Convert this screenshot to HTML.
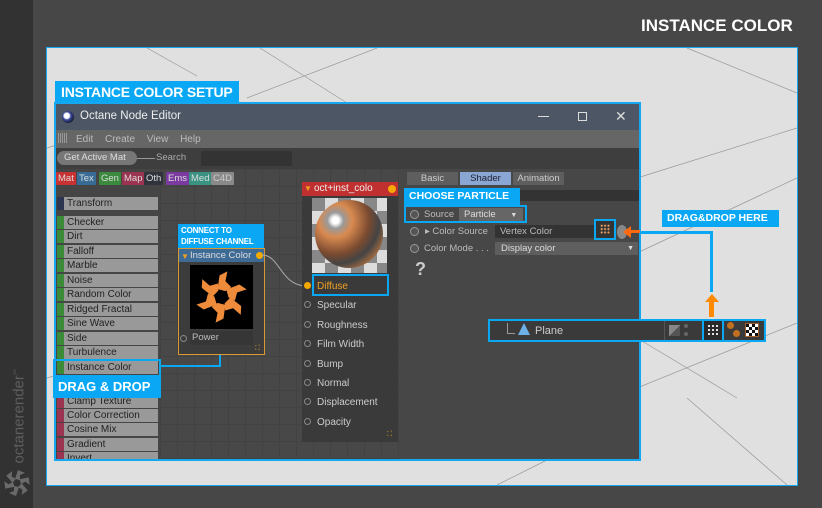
<!DOCTYPE html>
<html><head><meta charset="utf-8"><style>
*{margin:0;padding:0;box-sizing:border-box}
body{width:822px;height:508px;background:#474747;position:relative;overflow:hidden;font-family:"Liberation Sans",sans-serif;font-size:10px;color:#ddd}
.a{position:absolute}
.lbl{position:absolute;background:#0aa8f4;color:#fff;font-weight:bold;white-space:nowrap;overflow:hidden}
.li{position:absolute;left:57px;width:101px;height:13px;background:#999;color:#222;font-size:10px;line-height:13px;border-left:7px solid #3a8a3a;padding-left:3px}
.row{position:absolute;left:302px;width:86px;height:19px;color:#ccc;font-size:10px;line-height:19px}
.row span{position:absolute;left:12px;width:74px;top:1px;height:18px;background:#3a3a3a;padding-left:3px}
.row i{position:absolute;left:2px;top:6px;width:7px;height:7px;border:1.5px solid #888;border-radius:50%}
.tab{position:absolute;top:172px;height:13px;font-size:9.5px;line-height:13px;color:#ddd;padding:0 2px;border-radius:1px}
</style></head><body>
<div class="a" style="left:0;top:0;width:33px;height:508px;background:#323232"></div>
<div class="a" style="left:-36px;top:400px;width:110px;transform:rotate(-90deg);color:#5e5e5e;font-size:15px;white-space:nowrap">octanerender<sup style="font-size:6px">™</sup></div>
<svg class="a" style="left:2px;top:468px" width="30" height="30" viewBox="-15 -15 30 30"><g fill="#6a6a6a">
<path id="b" d="M-2,-4 L1,-13 L8,-10 L3,-8 L3,-3 Z"/>
<use href="#b" transform="rotate(60)"/><use href="#b" transform="rotate(120)"/><use href="#b" transform="rotate(180)"/><use href="#b" transform="rotate(240)"/><use href="#b" transform="rotate(300)"/></g></svg>

<div class="a" style="left:641px;top:16px;color:#fff;font-weight:bold;font-size:17px;white-space:nowrap">INSTANCE COLOR</div>

<div class="a" style="left:46px;top:47px;width:752px;height:439px;background:#dfe0df;border:1.5px solid #15a8f0"></div>
<svg class="a" style="left:47px;top:48px" width="750" height="437"><g stroke="#999" stroke-width="0.7" fill="none">
<line x1="100" y1="0" x2="150" y2="28"/><line x1="0" y1="330" x2="20" y2="324"/>
<line x1="160" y1="48" x2="0" y2="100"/><line x1="213" y1="0" x2="300" y2="55"/><line x1="330" y1="0" x2="200" y2="50"/>
<line x1="590" y1="130" x2="750" y2="80"/><line x1="590" y1="205" x2="750" y2="130"/>
<line x1="640" y1="0" x2="750" y2="45"/><line x1="590" y1="340" x2="750" y2="275"/><line x1="590" y1="290" x2="690" y2="350"/>
<line x1="640" y1="350" x2="740" y2="437"/><line x1="450" y1="437" x2="500" y2="412"/></g></svg>

<div class="lbl" style="left:55px;top:81px;width:184px;height:22px;font-size:14px;letter-spacing:-0.2px;line-height:22px;padding-left:6px">INSTANCE COLOR SETUP</div>
<div class="a" style="left:54px;top:102px;width:587px;height:359px;border:2px solid #15a8f0;background:#4a4a4a"></div>
<div class="a" style="left:56px;top:104px;width:583px;height:26px;background:#4d5664"></div>
<div class="a" style="left:62px;top:111px;width:12px;height:12px;border-radius:50%;background:radial-gradient(circle at 40% 40%,#fff 0 25%,#3a4a9a 40%,#112 80%)"></div>
<div class="a" style="left:80px;top:110px;color:#eee;font-size:11.5px">Octane Node Editor</div>
<div class="a" style="left:538px;top:116px;width:11px;height:1px;background:#ddd"></div>
<div class="a" style="left:578px;top:112px;width:9px;height:9px;border:1px solid #ddd"></div>
<div class="a" style="left:615px;top:108px;color:#ddd;font-size:14px">✕</div>
<div class="a" style="left:56px;top:130px;width:583px;height:18px;background:#666"></div>
<div class="a" style="left:58px;top:133px;width:10px;height:10px;background:repeating-linear-gradient(90deg,#999 0 1px,transparent 1px 2px),#666"></div>
<div class="a" style="left:76px;top:134px;color:#bbb;font-size:10px;word-spacing:9px">Edit Create View Help</div>
<div class="a" style="left:56px;top:148px;width:583px;height:21px;background:#3e3e3e"></div>
<div class="a" style="left:57px;top:151px;width:80px;height:14px;background:#777;border-radius:7px;color:#ddd;font-size:9.5px;line-height:14px;padding-left:7px">Get Active Mat</div>
<div class="a" style="left:137px;top:158px;width:18px;height:1px;background:#999"></div>
<div class="a" style="left:156px;top:152px;color:#aaa;font-size:9.5px">Search</div>
<div class="a" style="left:201px;top:151px;width:91px;height:15px;background:#333;border-radius:2px"></div>
<div class="a" style="left:160px;top:169px;width:240px;height:290px;background-color:#484848;background-image:linear-gradient(#424242 1px,transparent 1px),linear-gradient(90deg,#424242 1px,transparent 1px);background-size:17px 17px"></div>
<div class="a" style="left:56px;top:169px;width:104px;height:290px;background:#454545"></div>
<div class="a" style="left:400px;top:169px;width:239px;height:290px;background:#474747"></div>

<div class="tab" style="left:56px;background:#c83232">Mat</div>
<div class="tab" style="left:77px;background:#386c96">Tex</div>
<div class="tab" style="left:99px;background:#3b8a3e">Gen</div>
<div class="tab" style="left:122px;background:#9a3450">Map</div>
<div class="tab" style="left:144px;background:#30333c">Oth</div>
<div class="tab" style="left:166px;background:#7a3aa0">Ems</div>
<div class="tab" style="left:189px;background:#3a9282">Med</div>
<div class="tab" style="left:211px;background:#8a8a8a;color:#ccc">C4D</div>

<div class="li" style="top:197px;border-left-color:#2b3550">Transform</div>
<div class="li" style="top:216px">Checker</div>
<div class="li" style="top:230px">Dirt</div>
<div class="li" style="top:245px">Falloff</div>
<div class="li" style="top:259px">Marble</div>
<div class="li" style="top:274px">Noise</div>
<div class="li" style="top:288px">Random Color</div>
<div class="li" style="top:303px">Ridged Fractal</div>
<div class="li" style="top:317px">Sine Wave</div>
<div class="li" style="top:332px">Side</div>
<div class="li" style="top:346px">Turbulence</div>
<div class="li" style="top:361px">Instance Color</div>
<div class="li" style="top:395px;border-left-color:#9a3450">Clamp Texture</div>
<div class="li" style="top:409px;border-left-color:#9a3450">Color Correction</div>
<div class="li" style="top:423px;border-left-color:#9a3450">Cosine Mix</div>
<div class="li" style="top:438px;border-left-color:#9a3450">Gradient</div>
<div class="li" style="top:452px;height:7px;border-left-color:#9a3450;overflow:hidden">Invert</div>
<div class="a" style="left:53px;top:359px;width:108px;height:18px;border:2px solid #0aa8f4"></div>
<div class="lbl" style="left:53px;top:376px;width:108px;height:22px;font-size:13px;line-height:22px;padding-left:5px">DRAG &amp; DROP</div>
<div class="a" style="left:160px;top:365px;width:61px;height:2px;background:#0aa8f4"></div>
<div class="a" style="left:219px;top:354px;width:2px;height:13px;background:#0aa8f4"></div>

<div class="lbl" style="left:178px;top:224px;width:86px;height:24px;font-size:8px;letter-spacing:-0.2px;line-height:11px;padding:1px 3px">CONNECT TO<br>DIFFUSE CHANNEL</div>
<div class="a" style="left:178px;top:248px;width:87px;height:107px;border:1px solid #d89a30;background:#3c3c3c"></div>
<div class="a" style="left:179px;top:249px;width:85px;height:13px;background:#3e6a96;color:#ddd;font-size:9.5px;line-height:13px;padding-left:11px">Instance Color</div>
<div class="a" style="left:181px;top:252px;color:#f0a020;font-size:8px">▼</div>
<div class="a" style="left:256px;top:252px;width:7px;height:7px;border-radius:50%;background:#f5a800"></div>
<div class="a" style="left:190px;top:265px;width:63px;height:64px;background:#000"></div>
<svg class="a" style="left:190px;top:265px" width="63" height="64" viewBox="-32 -32 64 64"><g fill="#ef8c3c">
<path id="c" d="M-4,-8 L-2,-22 L6,-26 L4,-16 L10,-10 L4,-6 Z"/>
<use href="#c" transform="rotate(60)"/><use href="#c" transform="rotate(120)"/><use href="#c" transform="rotate(180)"/><use href="#c" transform="rotate(240)"/><use href="#c" transform="rotate(300)"/></g><circle r="6" fill="#000"/></svg>
<div class="a" style="left:190px;top:331px;width:63px;height:14px;background:#363636;color:#bbb;font-size:9.5px;line-height:14px;padding-left:2px">Power</div>
<div class="a" style="left:180px;top:335px;width:7px;height:7px;border:1.5px solid #888;border-radius:50%"></div>
<div class="a" style="left:255px;top:345px;color:#e0a020;font-size:7px">⛶</div>

<svg class="a" style="left:260px;top:250px" width="50" height="40"><path d="M2,5 C20,5 20,35 46,36" stroke="#aaa" stroke-width="1" fill="none"/></svg>

<div class="a" style="left:302px;top:182px;width:96px;height:260px;background:#3a3a3a"></div>
<div class="a" style="left:302px;top:182px;width:96px;height:14px;background:#c03030;color:#eee;font-size:10px;line-height:14px;padding-left:12px">oct+inst_colo</div>
<div class="a" style="left:304px;top:184px;color:#f0a020;font-size:8px">▼</div>
<div class="a" style="left:388px;top:185px;width:8px;height:8px;border-radius:50%;background:#f5a800"></div>
<div class="a" style="left:312px;top:198px;width:75px;height:75px;background:repeating-conic-gradient(#ddd 0 25%,#888 0 50%) 0 0/26px 26px"></div>
<div class="a" style="left:315px;top:200px;width:68px;height:68px;border-radius:50%;background:radial-gradient(circle at 30% 30%,#fff 0 5%,#999 12%,#d98a50 25%,#7a4a30 50%,#444 65%,#c87a40 85%)"></div>
<div class="row" style="top:276px;color:#f0a020"><i style="background:#f5a800;border-color:#f5a800"></i><span style="background:#3a3a3a">Diffuse</span></div>
<div class="a" style="left:312px;top:274px;width:77px;height:22px;border:2px solid #0aa8f4"></div>
<div class="row" style="top:295px"><i></i><span>Specular</span></div>
<div class="row" style="top:315px"><i></i><span>Roughness</span></div>
<div class="row" style="top:334px"><i></i><span>Film Width</span></div>
<div class="row" style="top:354px"><i></i><span>Bump</span></div>
<div class="row" style="top:373px"><i></i><span>Normal</span></div>
<div class="row" style="top:392px"><i></i><span>Displacement</span></div>
<div class="row" style="top:412px"><i></i><span>Opacity</span></div>
<div class="a" style="left:387px;top:431px;color:#e0a020;font-size:7px">⛶</div>

<div class="a" style="left:407px;top:172px;width:51px;height:13px;background:#5e5e5e;color:#ccc;font-size:9.5px;line-height:13px;text-align:center">Basic</div>
<div class="a" style="left:460px;top:172px;width:51px;height:13px;background:#8aa6d2;color:#223;font-size:9.5px;line-height:13px;text-align:center">Shader</div>
<div class="a" style="left:513px;top:172px;width:51px;height:13px;background:#5e5e5e;color:#ccc;font-size:9.5px;line-height:13px;text-align:center">Animation</div>
<div class="a" style="left:404px;top:190px;width:235px;height:11px;background:#333"></div>
<div class="lbl" style="left:404px;top:188px;width:116px;height:17px;font-size:10.5px;line-height:17px;padding-left:5px">CHOOSE PARTICLE</div>
<div class="a" style="left:404px;top:205px;width:123px;height:18px;border:2px solid #0aa8f4"></div>
<div class="a" style="left:410px;top:210px;width:9px;height:9px;border-radius:50%;border:1.5px solid #999;background:#555"></div>
<div class="a" style="left:424px;top:209px;color:#bbb;font-size:9.5px">Source</div>
<div class="a" style="left:459px;top:208px;width:64px;height:13px;background:#666;color:#ddd;font-size:9.5px;line-height:13px;padding-left:5px">Particle <span style="font-size:7px;margin-left:12px">▼</span></div>
<div class="a" style="left:410px;top:227px;width:9px;height:9px;border-radius:50%;border:1.5px solid #999;background:#555"></div>
<div class="a" style="left:425px;top:226px;color:#bbb;font-size:9.5px">▸ Color Source</div>
<div class="a" style="left:495px;top:225px;width:101px;height:13px;background:#333;color:#bbb;font-size:9.5px;line-height:13px;padding-left:5px">Vertex Color</div>
<div class="a" style="left:594px;top:219px;width:22px;height:21px;border:2px solid #0aa8f4;background:#333"></div>
<div class="a" style="left:600px;top:224px;width:10px;height:10px;background:radial-gradient(circle,#e8a060 0 0.9px,transparent 1.2px) 0 0/3.4px 3.4px"></div>
<div class="a" style="left:617px;top:225px;width:10px;height:14px;background:#888;border-radius:50%"></div>
<div class="a" style="left:623px;top:226px;width:0;height:0;border-top:6px solid transparent;border-bottom:6px solid transparent;border-right:8px solid #ff6a10"></div>
<div class="a" style="left:630px;top:230px;width:10px;height:3px;background:#ff6a10"></div>
<div class="a" style="left:410px;top:244px;width:9px;height:9px;border-radius:50%;border:1.5px solid #999;background:#555"></div>
<div class="a" style="left:424px;top:243px;color:#bbb;font-size:9.5px">Color Mode . . .</div>
<div class="a" style="left:495px;top:242px;width:143px;height:13px;background:#5e5e5e;color:#ddd;font-size:9.5px;line-height:13px;padding-left:6px">Display color<span style="position:absolute;right:4px;font-size:7px">▼</span></div>
<div class="a" style="left:415px;top:259px;color:#ccc;font-size:18px;font-weight:bold">?</div>

<div class="lbl" style="left:662px;top:210px;width:117px;height:17px;font-size:10.5px;line-height:17px;padding-left:5px">DRAG&amp;DROP HERE</div>
<div class="a" style="left:640px;top:231px;width:73px;height:3px;background:#0aa8f4"></div>
<div class="a" style="left:710px;top:231px;width:3px;height:61px;background:#0aa8f4"></div>
<div class="a" style="left:705px;top:294px;width:0;height:0;border-left:7px solid transparent;border-right:7px solid transparent;border-bottom:8px solid #ff8a00"></div>
<div class="a" style="left:709px;top:301px;width:5px;height:16px;background:#ff8a00"></div>
<div class="a" style="left:488px;top:319px;width:278px;height:23px;border:2px solid #0aa8f4;background:#3a3a3a"></div>
<div class="a" style="left:507px;top:323px;width:1px;height:11px;background:#999"></div>
<div class="a" style="left:507px;top:333px;width:8px;height:1px;background:#999"></div>
<div class="a" style="left:518px;top:323px;width:0;height:0;border-left:6px solid transparent;border-right:6px solid transparent;border-bottom:12px solid #6cb0e8"></div>
<div class="a" style="left:535px;top:325px;color:#ccc;font-size:11px">Plane</div>
<div class="a" style="left:664px;top:321px;width:1px;height:19px;background:#555"></div>
<div class="a" style="left:669px;top:325px;width:11px;height:11px;background:linear-gradient(135deg,#888 50%,#555 50%)"></div>
<div class="a" style="left:684px;top:324px;width:4px;height:4px;border-radius:50%;background:#666"></div>
<div class="a" style="left:684px;top:332px;width:4px;height:4px;border-radius:50%;background:#666"></div>
<div class="a" style="left:702px;top:319px;width:22px;height:23px;border:2px solid #0aa8f4;background:#2a2a2a"></div>
<div class="a" style="left:707px;top:324px;width:12px;height:12px;background:radial-gradient(circle,#fff 0 0.9px,transparent 1.2px) 0 0/4px 4px"></div>
<div class="a" style="left:727px;top:322px;width:7px;height:7px;border-radius:50%;background:#c07020"></div>
<div class="a" style="left:733px;top:330px;width:7px;height:7px;border-radius:50%;background:#c07020"></div>
<div class="a" style="left:745px;top:323px;width:14px;height:14px;border:1.5px solid #a06030;background:repeating-conic-gradient(#fff 0 25%,#111 0 50%) 0 0/6px 6px"></div>
</body></html>
